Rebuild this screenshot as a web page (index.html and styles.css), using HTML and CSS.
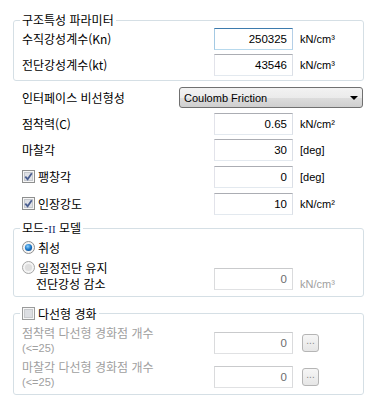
FILE: index.html
```html
<!DOCTYPE html>
<html lang="ko">
<head>
    <meta charset="UTF-8">
    <title>인터페이스 속성</title>
    <link rel="stylesheet" href="styles.css">
</head>
<body>
    <div class="panel">
        <fieldset class="group group-struct">
            <legend>구조특성 파라미터</legend>
            <div class="row">
                <span class="label">수직강성계수(Kn)</span>
                <input type="text" class="field focused" value="250325">
                <span class="unit">kN/cm³</span>
            </div>
            <div class="row">
                <span class="label">전단강성계수(kt)</span>
                <input type="text" class="field" value="43546">
                <span class="unit">kN/cm³</span>
            </div>
        </fieldset>

        <div class="plain">
            <div class="combo-row">
                <span class="label">인터페이스 비선형성</span>
                <div class="combo">
                    <span>Coulomb Friction</span>
                    <svg class="arrow" width="8" height="4" viewBox="0 0 8 4"><path d="M0 0 H8 L4 4 Z" fill="#000"/></svg>
                </div>
            </div>
            <div class="row">
                <span class="label">점착력(C)</span>
                <input type="text" class="field" value="0.65">
                <span class="unit">kN/cm²</span>
            </div>
            <div class="row">
                <span class="label">마찰각</span>
                <input type="text" class="field" value="30">
                <span class="unit">[deg]</span>
            </div>
            <div class="row">
                <label class="label check">
                    <svg class="box" width="13" height="13" viewBox="0 0 13 13">
                        <rect x="0.5" y="0.5" width="12" height="12" fill="#f6f6f6" stroke="#8e8f8f"/>
                        <rect x="2.5" y="2.5" width="8" height="8" fill="#dfe1e6" stroke="#c4c7cc"/>
                        <path d="M3.3 6.6 L5.6 9.2 L9.8 3.2" fill="none" stroke="#4b5f91" stroke-width="1.8"/>
                    </svg>
                    팽창각
                </label>
                <input type="text" class="field" value="0">
                <span class="unit">[deg]</span>
            </div>
            <div class="row">
                <label class="label check">
                    <svg class="box" width="13" height="13" viewBox="0 0 13 13">
                        <rect x="0.5" y="0.5" width="12" height="12" fill="#f6f6f6" stroke="#8e8f8f"/>
                        <rect x="2.5" y="2.5" width="8" height="8" fill="#dfe1e6" stroke="#c4c7cc"/>
                        <path d="M3.3 6.6 L5.6 9.2 L9.8 3.2" fill="none" stroke="#4b5f91" stroke-width="1.8"/>
                    </svg>
                    인장강도
                </label>
                <input type="text" class="field" value="10">
                <span class="unit">kN/cm²</span>
            </div>
        </div>

        <fieldset class="group group-mode">
            <legend>모드-<span class="roman">II</span> 모델</legend>
            <label class="radio-row">
                <svg class="radio" width="13" height="13" viewBox="0 0 13 13">
                    <defs>
                        <radialGradient id="dot" cx="0.4" cy="0.35" r="0.7">
                            <stop offset="0" stop-color="#8fd3ff"/>
                            <stop offset="0.6" stop-color="#1d79c9"/>
                            <stop offset="1" stop-color="#0f4f95"/>
                        </radialGradient>
                    </defs>
                    <circle cx="6.5" cy="6.5" r="6" fill="#f4f4f4" stroke="#8e8f8f"/>
                    <circle cx="6.5" cy="6.5" r="3.6" fill="url(#dot)"/>
                </svg>
                취성
            </label>
            <div class="row tall">
                <label class="label radio-label">
                    <span class="radio-line">
                        <svg class="radio" width="13" height="13" viewBox="0 0 13 13">
                            <circle cx="6.5" cy="6.5" r="6" fill="#f4f4f4" stroke="#a5a6a6"/>
                            <circle cx="6.5" cy="6.5" r="3.6" fill="#dedede"/>
                        </svg>
                        일정전단 유지
                    </span>
                    <span class="indent">전단강성 감소</span>
                </label>
                <input type="text" class="field disabled" value="0" disabled>
                <span class="unit muted">kN/cm³</span>
            </div>
        </fieldset>

        <fieldset class="group group-multi">
            <legend>
                <label class="check">
                    <svg class="box" width="13" height="13" viewBox="0 0 13 13">
                        <rect x="0.5" y="0.5" width="12" height="12" fill="#f6f6f6" stroke="#9a9b9b"/>
                        <rect x="2.5" y="2.5" width="8" height="8" fill="#dcdee2" stroke="#c8cacd"/>
                    </svg>
                    다선형 경화
                </label>
            </legend>
            <div class="row multi">
                <span class="label muted two-line">
                    <span class="first">점착력 다선형 경화점 개수</span>
                    <span class="limit">(&lt;=25)</span>
                </span>
                <input type="text" class="field disabled" value="0" disabled>
                <button type="button" class="dots" disabled>...</button>
            </div>
            <div class="row multi">
                <span class="label muted two-line">
                    <span class="first">마찰각 다선형 경화점 개수</span>
                    <span class="limit">(&lt;=25)</span>
                </span>
                <input type="text" class="field disabled" value="0" disabled>
                <button type="button" class="dots" disabled>...</button>
            </div>
        </fieldset>
    </div>
</body>
</html>
```

FILE: styles.css
```css
* {
    box-sizing: border-box;
}

body {
    margin: 0;
    background-color: white;
    font-family: "Noto Sans CJK KR", "Noto Sans", sans-serif;
    font-size: 12px;
    line-height: 16px;
    color: #000;
}

.panel {
    width: 364px;
    padding: 12px 0 0 13px;
}

.group {
    margin: 0;
    padding: 0 0 4px 8px;
    border: 1px solid #d5dfe5;
    border-radius: 3px;
    min-inline-size: 0;
}

.group legend {
    padding: 0 2px;
    margin-left: -2px;
    line-height: 16px;
}

.roman {
    font-family: "Liberation Serif", serif;
    font-size: 11px;
    color: #1b2a6b;
}

.row {
    display: grid;
    grid-template-columns: 185px 79px auto;
    column-gap: 7px;
    align-items: center;
    height: 22px;
}

.group-struct .row + .row {
    margin-top: 4px;
}

.plain {
    display: flex;
    flex-direction: column;
    gap: 4.67px;
    padding: 6px 0 0 9px;
}

.combo-row {
    display: grid;
    grid-template-columns: 157px 184px;
    align-items: center;
    height: 21px;
}

.combo {
    display: flex;
    justify-content: space-between;
    align-items: center;
    height: 21px;
    padding: 0 4px 0 4px;
    border: 1px solid #707070;
    border-radius: 3px;
    background: linear-gradient(#f2f2f2, #ebebeb 50%, #dddddd 51%, #cfcfcf);
    font-family: "Liberation Sans", sans-serif;
    font-size: 11px;
}

.check {
    display: flex;
    align-items: center;
    gap: 3px;
}

.box, .radio {
    flex: none;
}

.field {
    width: 79px;
    height: 22px;
    margin: 0;
    padding: 0 5px 0 0;
    border: 1px solid;
    border-color: #abadb3 #dbdfe6 #e3e9ef #e2e3ea;
    background-color: white;
    text-align: right;
    font-family: "Liberation Sans", sans-serif;
    font-size: 11.5px;
    color: #000;
    outline: none;
}

.field.focused {
    border-color: #3d7bad #b5cfe7 #b7d9ed #a4c9e3;
}

.field.disabled {
    border-color: #c9cacc #dadbdd #e0e1e3 #dadbdd;
    color: #6d6d6d;
}

.unit {
    font-family: "Liberation Sans", sans-serif;
    font-size: 11px;
}

.muted {
    color: #a0a0a0;
}

/* mode-II group */
.group-mode {
    margin-top: 5px;
    padding-bottom: 4px;
}

.radio-row {
    display: flex;
    align-items: center;
    gap: 3px;
    margin-top: 3px;
    height: 16px;
}

.row.tall {
    height: 32px;
    margin-top: 4px;
    align-items: end;
}

.row.tall .field {
    margin-bottom: 2px;
}

.radio-label {
    display: flex;
    flex-direction: column;
}

.radio-line {
    display: flex;
    align-items: center;
    gap: 3px;
}

.indent {
    padding-left: 14px;
}

/* multi-linear group */
.group-multi {
    margin-top: 9px;
    padding-bottom: 5px;
}

.row.multi {
    height: 29px;
    align-items: end;
    margin-top: 4px;
}

.row.multi + .row.multi {
    margin-top: 5px;
}

.two-line {
    display: flex;
    flex-direction: column;
    align-self: start;
}

.two-line .first {
    line-height: 14px;
}

.two-line .limit {
    margin-top: 2px;
    font-family: "Liberation Sans", sans-serif;
    font-size: 11px;
    line-height: 12px;
}

.row.multi .field {
    margin-bottom: 1px;
}

.dots {
    width: 17px;
    height: 18px;
    margin: 0 0 3px 2px;
    padding: 0 0 4px;
    border: 1px solid #b5b5b5;
    border-radius: 3px;
    background: linear-gradient(#f6f6f6, #e6e6e6);
    font-family: "Liberation Sans", sans-serif;
    font-size: 10px;
    color: #8a8a8a;
}
```
